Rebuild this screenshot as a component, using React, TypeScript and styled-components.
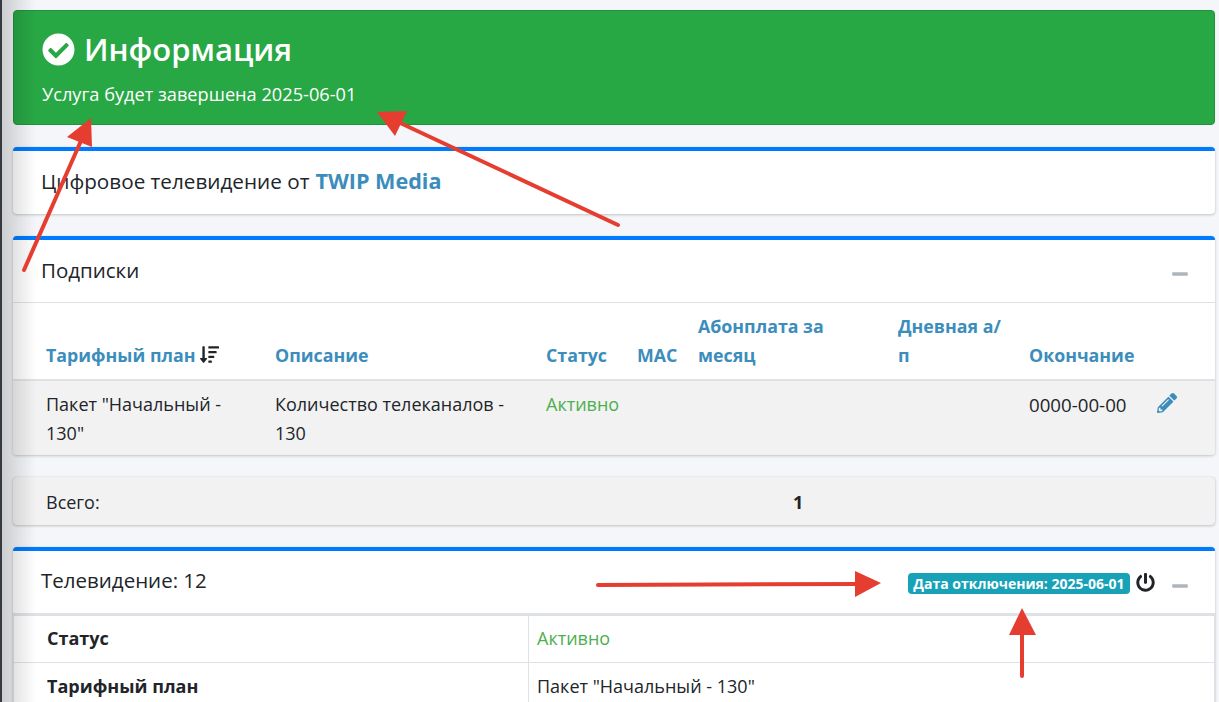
import styled, { createGlobalStyle } from "styled-components";
import { FaCheckCircle, FaMinus, FaPencilAlt, FaPowerOff, FaSortAmountDown } from "react-icons/fa";

const GlobalStyle = createGlobalStyle`
  html, body {
    margin: 0;
    padding: 0;
    height: 702px;
    overflow: hidden;
    background: #f4f6f9;
  }
  body {
    font-family: "Open Sans", "Noto Sans", "Liberation Sans", sans-serif;
    font-size: 18px;
    color: #212529;
  }
  * { box-sizing: border-box; }
`;

const Page = styled.div`
  position: relative;
  height: 702px;
  overflow: hidden;
  padding: 10px 4px 0 13px;
  display: flex;
  flex-direction: column;
  gap: 22px;
`;

const SideShadow = styled.div`
  position: absolute;
  inset: 0 auto 0 0;
  width: 36px;
  border-left: 2px solid #343a40;
  background: linear-gradient(90deg, rgba(0, 0, 0, 0.17), rgba(0, 0, 0, 0));
  pointer-events: none;
`;

const Alert = styled.div`
  height: 115px;
  flex: none;
  background: #28a745;
  border: 1px solid #23923d;
  border-radius: 4px;
  padding: 16px 28px;
  color: #fff;
`;

const AlertTitle = styled.h5`
  margin: 0 0 10px;
  display: flex;
  align-items: center;
  gap: 9px;
  font-size: 31px;
  line-height: 44px;
  font-weight: 600;
`;

const AlertText = styled.div`
  font-size: 18.2px;
  line-height: 26px;
`;

const Card = styled.section`
  flex: none;
  background: #fff;
  border-top: 4px solid #007bff;
  border-radius: 4px;
  box-shadow: 0 0 1px rgba(0, 0, 0, 0.125), 0 1px 3px rgba(0, 0, 0, 0.2);
`;

const BrandHeader = styled.div`
  height: 63px;
  display: flex;
  align-items: center;
  padding: 0 28px 4px;
  font-size: 20.7px;
`;

const BrandLink = styled.a`
  color: #3c8dbc;
  font-size: 21.6px;
  font-weight: 700;
  margin-left: 6px;
`;

const CardHeader = styled.div<{ $height: number; $rule: number; $lift: number }>`
  height: ${(p) => p.$height}px;
  display: flex;
  align-items: center;
  padding: 0 26px ${(p) => p.$lift}px 28px;
  border-bottom: ${(p) => p.$rule}px solid #dee2e6;
  font-size: 20.5px;
`;

const CardTitle = styled.div`
  flex: 1;
`;

const Collapse = styled.span`
  display: flex;
  color: #adb5bd;
  font-size: 18px;
  margin-top: 8px;
`;

const Subscriptions = styled.table`
  width: 100%;
  table-layout: fixed;
  border-collapse: collapse;
`;

const HeadCell = styled.th`
  padding: 8px 25px 9px 0;
  height: 77px;
  vertical-align: bottom;
  text-align: left;
  font-size: 17.8px;
  font-weight: 700;
  line-height: 29px;
  color: #3c8dbc;
  border-bottom: 2px solid #dee2e6;
  &:first-child { padding-left: 33px; padding-right: 0; }
`;

const SortIcon = styled(FaSortAmountDown)`
  color: #212529;
  font-size: 19px;
  margin-left: 5px;
  vertical-align: -2px;
`;

const BodyRow = styled.tr`
  background: #f2f2f2;
`;

const BodyCell = styled.td`
  padding: 9px 25px 7px 0;
  height: 74px;
  vertical-align: top;
  line-height: 29px;
  &:first-child { padding-left: 33px; border-bottom-left-radius: 4px; }
  &:last-child { border-bottom-right-radius: 4px; padding-right: 0; }
`;

const DateCell = styled(BodyCell)`
  padding-right: 0;
  font-size: 18.7px;
  white-space: nowrap;
`;

const Active = styled.span`
  color: #4caf50;
`;

const EditIcon = styled(FaPencilAlt)`
  color: #3c8dbc;
  font-size: 20px;
  margin-left: 12px;
  vertical-align: -2px;
`;

const TotalBar = styled.div`
  flex: none;
  height: 48px;
  background: #f2f2f2;
  border-radius: 4px;
  box-shadow: 0 0 1px rgba(0, 0, 0, 0.2), 0 1px 3px rgba(0, 0, 0, 0.2);
  display: grid;
  grid-template-columns: 747px 1fr;
  align-items: center;
  padding: 2px 0 0 33px;
`;

const TotalValue = styled.b`
  font-weight: 700;
`;

const HeaderTools = styled.div`
  display: flex;
  align-items: center;
  gap: 16px;
  margin-top: 4px;
`;

const Badge = styled.span`
  background: #17a2b8;
  color: #fff;
  font-size: 14px;
  font-weight: 700;
  line-height: 21px;
  padding: 0 5.5px;
  border-radius: 4px;
  margin: 3px -10px 0 0;
  white-space: nowrap;
`;

const Power = styled(FaPowerOff)`
  color: #212529;
  font-size: 19px;
`;

const InfoTable = styled.table`
  width: 100%;
  table-layout: fixed;
  border-collapse: collapse;
`;

const InfoLabel = styled.th`
  width: 515px;
  height: 47px;
  padding: 0 0 0 33px;
  text-align: left;
  font-weight: 700;
  border: 1px solid #dee2e6;
  tr:first-child > & { padding-bottom: 2px; }
`;

const InfoValue = styled.td`
  padding: 0 8px;
  border: 1px solid #dee2e6;
  tr:first-child > & { padding-bottom: 2px; }
`;

const Arrows = styled.svg`
  position: absolute;
  inset: 0;
  width: 1219px;
  height: 702px;
  pointer-events: none;
`;

const columns = [262, 271, 91, 61, 200, 131, 116, 70];
const headers = ["Тарифный план", "Описание", "Статус", "MAC", "Абонплата за месяц", "Дневная а/п", "Окончание", ""];

const arrowLines = [
  { from: [24, 270], to: [84, 134], head: "91,118 67,137 92,147" },
  { from: [618, 225], to: [396, 121], head: "377,112 407,111 395,136" },
  { from: [598, 585], to: [860, 584], head: "881,583 855,571 855,597" },
  { from: [1022, 676], to: [1022, 630], head: "1022,608 1009,635 1036,635" },
];

export default function App() {
  return (
    <>
      <GlobalStyle />
      <Page>
        <Alert>
          <AlertTitle>
            <FaCheckCircle size={33} />
            Информация
          </AlertTitle>
          <AlertText>Услуга будет завершена 2025-06-01</AlertText>
        </Alert>

        <Card>
          <BrandHeader>
            Цифровое телевидение от<BrandLink>TWIP Media</BrandLink>
          </BrandHeader>
        </Card>

        <Card>
          <CardHeader $height={63} $rule={1} $lift={2}>
            <CardTitle>Подписки</CardTitle>
            <Collapse><FaMinus /></Collapse>
          </CardHeader>
          <Subscriptions>
            <colgroup>
              {columns.map((w, i) => <col key={i} width={w} />)}
            </colgroup>
            <thead>
              <tr>
                {headers.map((h, i) => (
                  <HeadCell key={i}>
                    {h}
                    {i === 0 && <SortIcon />}
                  </HeadCell>
                ))}
              </tr>
            </thead>
            <tbody>
              <BodyRow>
                <BodyCell>Пакет "Начальный - 130"</BodyCell>
                <BodyCell>Количество телеканалов - 130</BodyCell>
                <BodyCell><Active>Активно</Active></BodyCell>
                <BodyCell />
                <BodyCell />
                <BodyCell />
                <DateCell>0000-00-00</DateCell>
                <BodyCell><EditIcon /></BodyCell>
              </BodyRow>
            </tbody>
          </Subscriptions>
        </Card>

        <TotalBar>
          <span>Всего:</span>
          <TotalValue>1</TotalValue>
        </TotalBar>

        <Card>
          <CardHeader $height={64} $rule={2} $lift={4}>
            <CardTitle>Телевидение: 12</CardTitle>
            <HeaderTools>
              <Badge>Дата отключения: 2025-06-01</Badge>
              <Power />
              <Collapse><FaMinus /></Collapse>
            </HeaderTools>
          </CardHeader>
          <InfoTable>
            <tbody>
              <tr>
                <InfoLabel>Статус</InfoLabel>
                <InfoValue><Active>Активно</Active></InfoValue>
              </tr>
              <tr>
                <InfoLabel>Тарифный план</InfoLabel>
                <InfoValue>Пакет "Начальный - 130"</InfoValue>
              </tr>
            </tbody>
          </InfoTable>
        </Card>

        <SideShadow />
        <Arrows viewBox="0 0 1219 702">
          {arrowLines.map((a, i) => (
            <g key={i}>
              <line x1={a.from[0]} y1={a.from[1]} x2={a.to[0]} y2={a.to[1]} stroke="#e53e30" strokeWidth="4" strokeLinecap="round" />
              <polygon points={a.head} fill="#e53e30" />
            </g>
          ))}
        </Arrows>
      </Page>
    </>
  );
}
